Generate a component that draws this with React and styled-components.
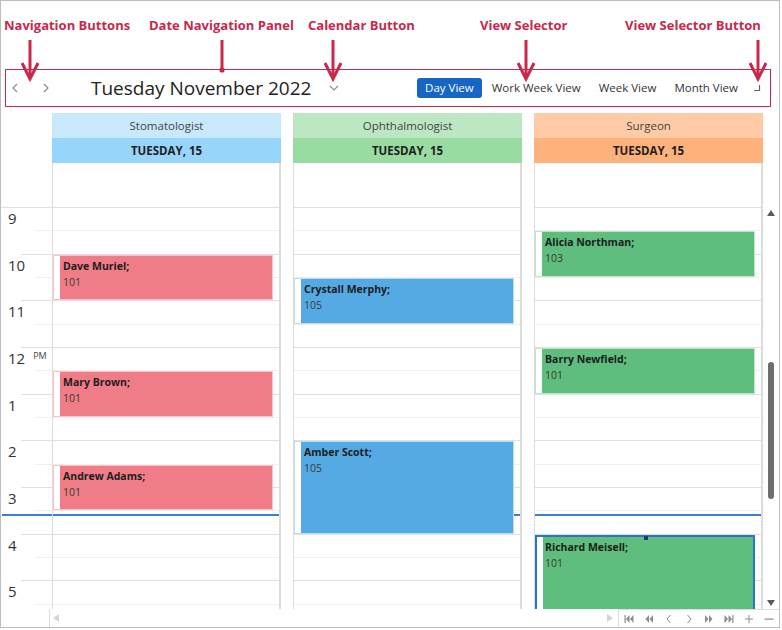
import React from "react";
import styled, { createGlobalStyle } from "styled-components";

const HOUR = 140 / 3;
const SLOT = HOUR / 2;
const CRIMSON = "#c7284c";
const LINE_HOUR = "#e0e0e0";
const LINE_HALF = "#efefef";

const GlobalStyle = createGlobalStyle`
  body {
    margin: 0;
    background: #fff;
    font-family: "Open Sans", "Noto Sans", sans-serif;
  }
`;

const resources = [
  {
    name: "Stomatologist",
    head: "#c8e8fc",
    date: "#97d5fa",
    appts: [
      { who: "Dave Muriel;", room: "101", start: 10, end: 11 },
      { who: "Mary Brown;", room: "101", start: 12.5, end: 13.5 },
      { who: "Andrew Adams;", room: "101", start: 14.5, end: 15.5 }
    ],
    fill: "#f07c88",
    edge: "#f8c3c8"
  },
  {
    name: "Ophthalmologist",
    head: "#bde7c3",
    date: "#99dca1",
    appts: [
      { who: "Crystall Merphy;", room: "105", start: 10.5, end: 11.5 },
      { who: "Amber Scott;", room: "105", start: 14, end: 16 }
    ],
    fill: "#55aae4",
    edge: "#b9dcf4"
  },
  {
    name: "Surgeon",
    head: "#fecba6",
    date: "#feb27b",
    appts: [
      { who: "Alicia Northman;", room: "103", start: 9.5, end: 10.5 },
      { who: "Barry Newfield;", room: "101", start: 12, end: 13 },
      { who: "Richard Meisell;", room: "101", start: 16, end: 18, selected: true }
    ],
    fill: "#5fbd7d",
    edge: "#bfe5ca"
  }
];

const callouts = [
  { label: "Navigation Buttons", x: 4, arrow: 30 },
  { label: "Date Navigation Panel", x: 149, arrow: 222, dot: true },
  { label: "Calendar Button", x: 308, arrow: 333 },
  { label: "View Selector", x: 480, arrow: 526 },
  { label: "View Selector Button", x: 625, arrow: 758 }
];

const hours = ["9", "10", "11", "12", "1", "2", "3", "4", "5"];

const Page = styled.div`
  position: relative;
  width: 782px;
  height: 630px;
`;

const Callouts = styled.div`
  position: absolute;
  left: 0;
  top: 0;
  width: 782px;
  height: 90px;
  pointer-events: none;
`;

const CalloutLabel = styled.span`
  position: absolute;
  top: 16px;
  left: ${p => p.$x}px;
  font-size: 13px;
  line-height: 18px;
  font-weight: 700;
  color: ${CRIMSON};
  white-space: nowrap;
`;

const Frame = styled.div`
  width: 780px;
  height: 628px;
  box-sizing: border-box;
  border: 1px solid #bdbdbd;
  display: flex;
  flex-direction: column;
  overflow: hidden;
`;

const Toolbar = styled.div`
  margin: 68px 0 0 4px;
  width: 766px;
  height: 38px;
  box-sizing: border-box;
  border: 1px solid ${CRIMSON};
  display: flex;
  align-items: center;
  padding-right: 4px;
`;

const IconButton = styled.div`
  width: 18px;
  height: 20px;
  display: flex;
  align-items: center;
  justify-content: center;
  margin-left: ${p => p.$gap || 0}px;
  flex-shrink: 0;
`;

const Title = styled.div`
  margin-left: 36px;
  font-size: 19px;
  color: #222;
  white-space: nowrap;
`;

const ViewSelector = styled.div`
  margin-left: auto;
  display: flex;
  align-items: center;
  gap: 2px;
`;

const ViewItem = styled.div`
  height: 20px;
  line-height: 20px;
  padding: 0 8px;
  font-size: 11.5px;
  border-radius: 3px;
  white-space: nowrap;
  color: ${p => (p.$active ? "#fff" : "#333")};
  background: ${p => (p.$active ? "#1765c4" : "transparent")};
`;

const Scheduler = styled.div`
  margin-top: 6px;
  display: flex;
`;

const Ruler = styled.div`
  width: 51px;
  flex-shrink: 0;
  display: flex;
  flex-direction: column;
`;

const HeadSpacer = styled.div`
  height: 94px;
  flex-shrink: 0;
`;

const TimeArea = styled.div`
  position: relative;
  height: 402px;
  overflow: hidden;
`;

const RulerSlot = styled.div`
  position: relative;
  height: ${SLOT}px;
  display: flex;
  align-items: flex-start;
  padding-left: 7px;

  &::before {
    content: "";
    position: absolute;
    top: 0;
    right: 0;
    left: ${p => (p.$first ? 0 : p.$hour ? 20 : 34)}px;
    height: 1px;
    background: ${p => (p.$hour ? LINE_HOUR : LINE_HALF)};
  }
`;

const HourLabel = styled.span`
  margin-top: 1px;
  font-size: 15px;
  line-height: 20px;
  color: #333;
`;

const Meridiem = styled.span`
  margin: 3px 0 0 8px;
  font-size: 9px;
  line-height: 12px;
  color: #444;
`;

const NowLine = styled.div`
  position: absolute;
  left: ${p => p.$left || 0}px;
  right: 0;
  top: 307px;
  height: 2px;
  background: #3b80d2;
`;

const Column = styled.div`
  width: 229px;
  flex-shrink: 0;
  margin-left: ${p => (p.$first ? 0 : 12)}px;
  display: flex;
  flex-direction: column;
`;

const ResourceHead = styled.div`
  height: 25px;
  line-height: 25px;
  text-align: center;
  font-size: 11.5px;
  color: #444;
  background: ${p => p.$bg};
`;

const DateHead = styled.div`
  height: 25px;
  line-height: 25px;
  text-align: center;
  font-size: 11.5px;
  font-weight: 700;
  color: #1e1e1e;
  background: ${p => p.$bg};
`;

const AllDay = styled.div`
  height: 44px;
  box-sizing: border-box;
  border-left: 1px solid #dcdcdc;
  border-right: 2px solid #dcdcdc;
`;

const ColumnBody = styled(TimeArea)`
  border-left: 1px solid #dcdcdc;
  border-right: 2px solid #dcdcdc;
`;

const Slot = styled.div`
  height: ${SLOT}px;
  box-sizing: border-box;
  border-top: 1px solid ${p => (p.$hour ? LINE_HOUR : LINE_HALF)};
`;

const Appt = styled.div`
  position: absolute;
  left: 0;
  width: 220px;
  top: ${p => p.$top}px;
  height: ${p => p.$h}px;
  box-sizing: border-box;
  border: ${p => (p.$selected ? "2px solid #2b74c8" : `1px solid ${p.$edge}`)};
  background: ${p => p.$fill};
  padding: 2px 0 0 ${p => (p.$selected ? 8 : 9)}px;
  z-index: 1;

  &::before {
    content: "";
    position: absolute;
    left: 0;
    top: 0;
    bottom: 0;
    width: 6px;
    background: #fff;
  }
`;

const ApptName = styled.div`
  font-size: 10.5px;
  line-height: 16px;
  font-weight: 700;
  color: #1c1c1c;
`;

const ApptRoom = styled.div`
  font-size: 10.5px;
  line-height: 16px;
  color: #3a3a3a;
`;

const Grip = styled.div`
  position: absolute;
  top: -1px;
  left: 107px;
  width: 4px;
  height: 4px;
  background: #1d3c6e;
`;

const VScroll = styled.div`
  width: 16px;
  flex-shrink: 0;
  display: flex;
  flex-direction: column;
`;

const Track = styled.div`
  height: 402px;
  display: flex;
  flex-direction: column;
  align-items: center;
`;

const ScrollArrow = styled.div`
  height: 12px;
  display: flex;
  align-items: center;
  justify-content: center;
  margin-top: ${p => (p.$down ? "auto" : "0")};
`;

const Thumb = styled.div`
  margin-top: 143px;
  width: 6px;
  height: 137px;
  border-radius: 3px;
  background: #6e6e6e;
`;

const BottomBar = styled.div`
  height: 18px;
  display: flex;
  align-items: stretch;
`;

const BarSpacer = styled.div`
  width: 51px;
  border-right: 1px solid #dcdcdc;
`;

const BarArrow = styled.div`
  width: ${p => p.$w || 10}px;
  display: flex;
  align-items: center;
  justify-content: center;
  margin-left: ${p => p.$ml || 0}px;
`;

const Pager = styled.div`
  margin-left: 3px;
  width: 162px;
  box-sizing: border-box;
  border-left: 1px solid #dedede;
  border-top: 1px solid #dedede;
  display: flex;
  align-items: center;
`;

const PagerButton = styled.div`
  width: 20px;
  display: flex;
  align-items: center;
  justify-content: center;
`;

const Chevron = ({ dir, color = "#8a8a8a" }) => {
  const pts = {
    left: "5,1 1,5 5,9",
    right: "1,1 5,5 1,9",
    down: "1,1 5,5 9,1"
  }[dir];
  const down = dir === "down";
  return (
    <svg width={down ? 10 : 6} height={down ? 6 : 10} viewBox={down ? "0 0 10 6" : "0 0 6 10"}>
      <polyline points={pts} fill="none" stroke={color} strokeWidth="1.1" />
    </svg>
  );
};

const Corner = () => (
  <svg width="8" height="8" viewBox="0 0 8 8">
    <polyline points="6.5,1 6.5,6.5 1,6.5" fill="none" stroke="#666" strokeWidth="1.2" />
  </svg>
);

const Tri = ({ dir, color, size = 8 }) => {
  const pts = {
    up: "0,7 4,1 8,7",
    down: "0,1 4,7 8,1",
    left: "7,0 1,4 7,8",
    right: "1,0 7,4 1,8"
  }[dir];
  return (
    <svg width={size} height={size} viewBox="0 0 8 8">
      <polygon points={pts} fill={color} />
    </svg>
  );
};

const PagerIcon = ({ kind }) => {
  const c = "#8c8c8c";
  let body;
  switch (kind) {
    case "first":
      body = (
        <>
          <rect x="0.5" y="1" width="1.2" height="8" fill={c} />
          <polygon points="5.5,1 2,5 5.5,9" fill={c} />
          <polygon points="9.5,1 6,5 9.5,9" fill={c} />
        </>
      );
      break;
    case "prevPage":
      body = (
        <>
          <polygon points="5,1 1.5,5 5,9" fill={c} />
          <polygon points="9,1 5.5,5 9,9" fill={c} />
        </>
      );
      break;
    case "prev":
      body = <polyline points="6.5,1 3,5 6.5,9" fill="none" stroke={c} strokeWidth="1" />;
      break;
    case "next":
      body = <polyline points="3.5,1 7,5 3.5,9" fill="none" stroke={c} strokeWidth="1" />;
      break;
    case "nextPage":
      body = (
        <>
          <polygon points="1,1 4.5,5 1,9" fill={c} />
          <polygon points="5,1 8.5,5 5,9" fill={c} />
        </>
      );
      break;
    case "last":
      body = (
        <>
          <polygon points="0.5,1 4,5 0.5,9" fill={c} />
          <polygon points="4.5,1 8,5 4.5,9" fill={c} />
          <rect x="8.3" y="1" width="1.2" height="8" fill={c} />
        </>
      );
      break;
    case "plus":
      body = (
        <>
          <rect x="1" y="4.5" width="8" height="1" fill={c} />
          <rect x="4.5" y="1" width="1" height="8" fill={c} />
        </>
      );
      break;
    default:
      body = <rect x="0.5" y="4.5" width="9" height="1.2" fill={c} />;
  }
  return (
    <svg width="10" height="10" viewBox="0 0 10 10">
      {body}
    </svg>
  );
};

const CalloutArrows = () => (
  <svg width="782" height="90" style={{ position: "absolute", left: 0, top: 0 }}>
    {callouts.map(c =>
      c.dot ? (
        <g key={c.label}>
          <line x1={c.arrow} y1="40" x2={c.arrow} y2="69" stroke={CRIMSON} strokeWidth="3" />
          <circle cx={c.arrow} cy="70" r="2.6" fill={CRIMSON} />
        </g>
      ) : (
        <g key={c.label}>
          <line x1={c.arrow} y1="40" x2={c.arrow} y2="77" stroke={CRIMSON} strokeWidth="3" />
          <polyline
            points={`${c.arrow - 8},63 ${c.arrow},79 ${c.arrow + 8},63`}
            fill="none"
            stroke={CRIMSON}
            strokeWidth="3"
          />
        </g>
      )
    )}
  </svg>
);

function Appointment({ a, fill, edge }) {
  const top = (a.start - 9) * HOUR + 1;
  const h = (a.end - a.start) * HOUR - 1;
  return (
    <Appt $top={top} $h={h} $fill={fill} $edge={edge} $selected={a.selected}>
      {a.selected && <Grip />}
      <ApptName>{a.who}</ApptName>
      <ApptRoom>{a.room}</ApptRoom>
    </Appt>
  );
}

function ResourceColumn({ r, first }) {
  return (
    <Column $first={first}>
      <ResourceHead $bg={r.head}>{r.name}</ResourceHead>
      <DateHead $bg={r.date}>TUESDAY, 15</DateHead>
      <AllDay />
      <ColumnBody>
        {Array.from({ length: 18 }, (_, i) => (
          <Slot key={i} $hour={i % 2 === 0} />
        ))}
        <NowLine />
        {r.appts.map(a => (
          <Appointment key={a.who} a={a} fill={r.fill} edge={r.edge} />
        ))}
      </ColumnBody>
    </Column>
  );
}

export default function App() {
  return (
    <Page>
      <GlobalStyle />
      <Frame>
        <Toolbar>
          <IconButton>
            <Chevron dir="left" />
          </IconButton>
          <IconButton $gap={13}>
            <Chevron dir="right" />
          </IconButton>
          <Title>Tuesday November 2022</Title>
          <IconButton $gap={14}>
            <Chevron dir="down" />
          </IconButton>
          <ViewSelector>
            <ViewItem $active>Day View</ViewItem>
            <ViewItem>Work Week View</ViewItem>
            <ViewItem>Week View</ViewItem>
            <ViewItem>Month View</ViewItem>
            <IconButton>
              <Corner />
            </IconButton>
          </ViewSelector>
        </Toolbar>

        <Scheduler>
          <Ruler>
            <HeadSpacer />
            <TimeArea>
              {Array.from({ length: 18 }, (_, i) => (
                <RulerSlot key={i} $hour={i % 2 === 0} $first={i === 0}>
                  {i % 2 === 0 && <HourLabel>{hours[i / 2]}</HourLabel>}
                  {i === 6 && <Meridiem>PM</Meridiem>}
                </RulerSlot>
              ))}
              <NowLine $left={1} />
            </TimeArea>
          </Ruler>
          {resources.map((r, i) => (
            <ResourceColumn key={r.name} r={r} first={i === 0} />
          ))}
          <VScroll>
            <HeadSpacer />
            <Track>
              <ScrollArrow>
                <Tri dir="up" color="#5a5a5a" />
              </ScrollArrow>
              <Thumb />
              <ScrollArrow $down>
                <Tri dir="down" color="#5a5a5a" />
              </ScrollArrow>
            </Track>
          </VScroll>
        </Scheduler>

        <BottomBar>
          <BarSpacer />
          <BarArrow $ml={1}>
            <Tri dir="left" color="#d4d4d4" />
          </BarArrow>
          <BarArrow $ml={545}>
            <Tri dir="right" color="#d4d4d4" />
          </BarArrow>
          <Pager>
            {["first", "prevPage", "prev", "next", "nextPage", "last", "plus", "minus"].map(k => (
              <PagerButton key={k}>
                <PagerIcon kind={k} />
              </PagerButton>
            ))}
          </Pager>
        </BottomBar>
      </Frame>

      <Callouts>
        {callouts.map(c => (
          <CalloutLabel key={c.label} $x={c.x}>
            {c.label}
          </CalloutLabel>
        ))}
        <CalloutArrows />
      </Callouts>
    </Page>
  );
}
